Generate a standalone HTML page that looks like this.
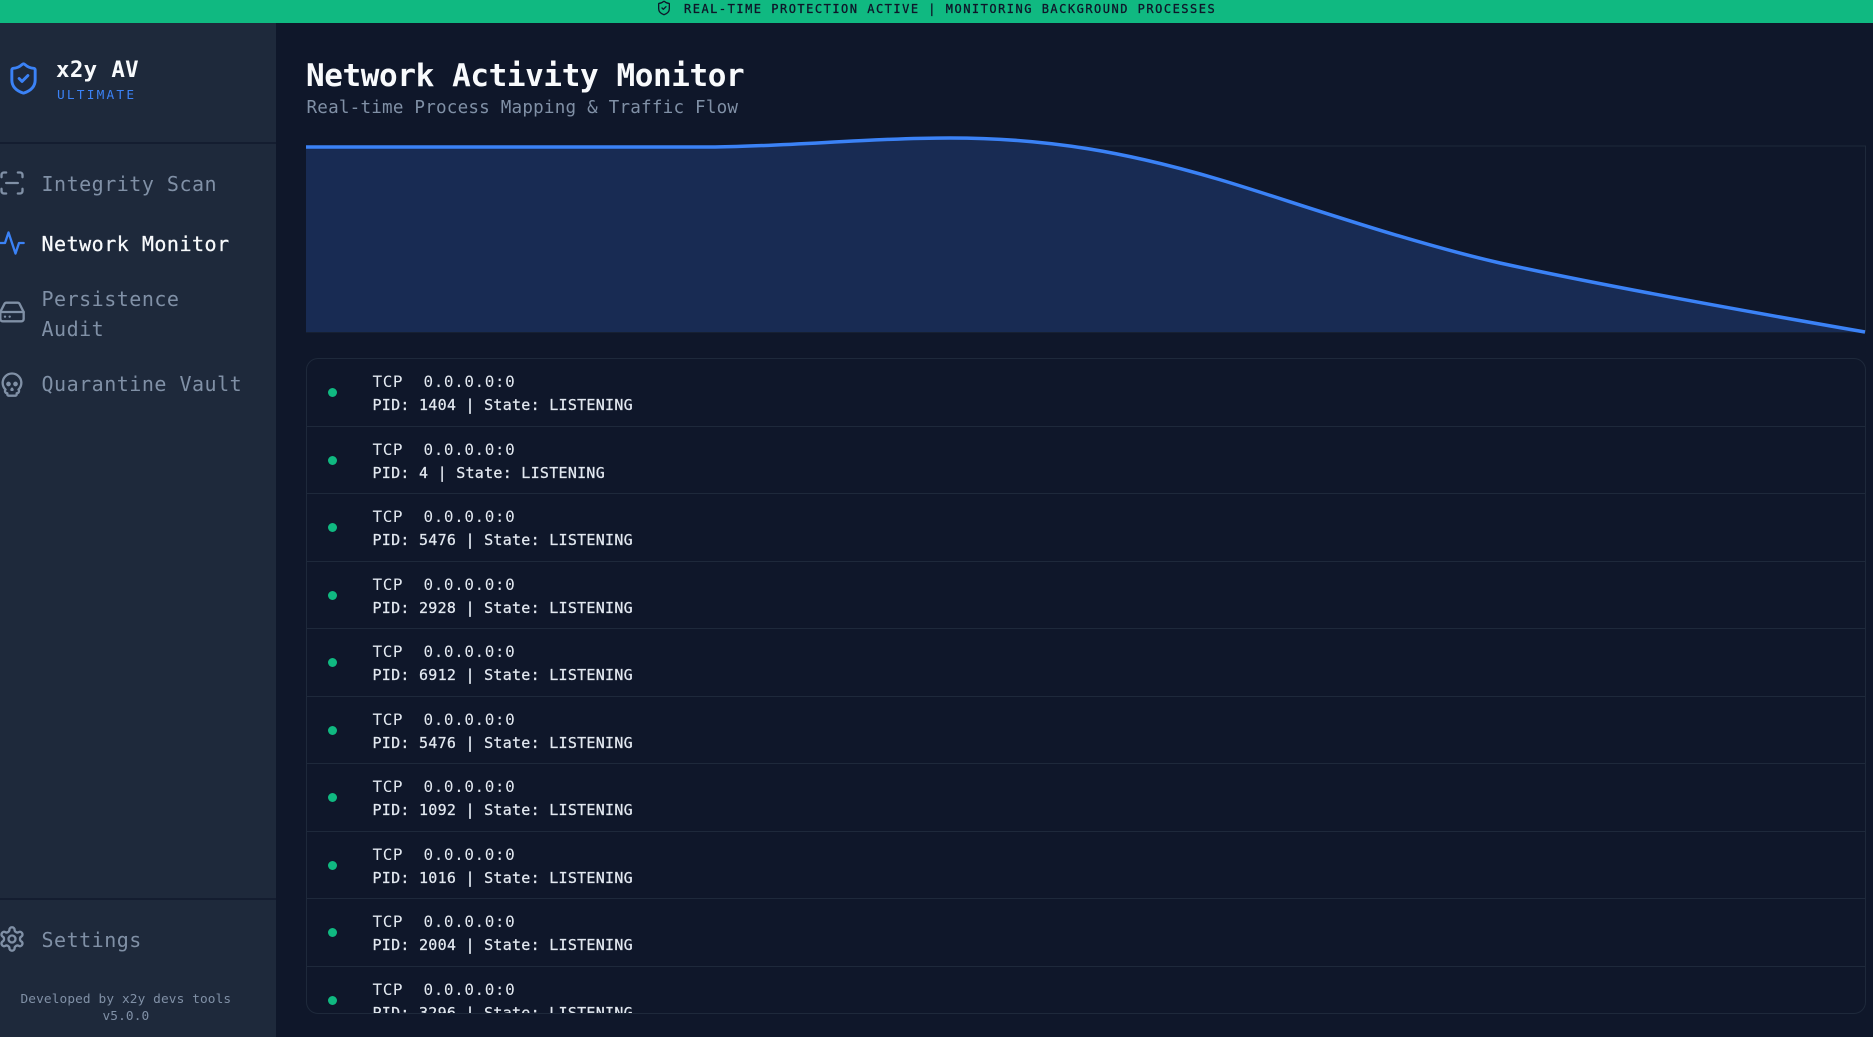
<!DOCTYPE html>
<html lang="en">
<head>
<meta charset="utf-8">
<title>x2y AV</title>
<style>
html,body{margin:0;padding:0;width:1873px;height:1037px;overflow:hidden;background:#0f172a}
body{position:relative;font-family:"DejaVu Sans Mono","Liberation Mono",monospace}
.t{position:absolute;white-space:pre;line-height:20px}
.abs{position:absolute}
svg{position:absolute;overflow:visible}
.ic{fill:none;stroke-width:2;stroke-linecap:round;stroke-linejoin:round}
.nav{font-size:20px;letter-spacing:.5px;color:#8090a6;left:41.5px}
.row{position:absolute;left:0;width:1559px;height:67.5px;box-sizing:border-box;border-bottom:1px solid #1e293b}
.row i{position:absolute;left:21px;top:29px;width:9px;height:9px;border-radius:50%;background:#10b981}
.row b{position:absolute;left:65.5px;top:13px;font-weight:400;font-size:16px;letter-spacing:.57px;color:#e2e8f0;line-height:20px;white-space:pre}
.row u{position:absolute;left:65.5px;top:36px;text-decoration:none;font-size:15px;letter-spacing:.27px;color:#e2e8f0;line-height:20px;white-space:pre;-webkit-text-stroke:.25px #e2e8f0}
</style>
</head>
<body>
<div class="abs" style="left:0;top:0;width:1873px;height:23px;background:#10b981"></div>
<svg style="left:656px;top:0" width="16" height="16" viewBox="0 0 24 24"><g class="ic" stroke="#0f172a"><path d="M20 13c0 5-3.5 7.5-7.66 8.95a1 1 0 0 1-.67-.01C7.5 20.5 4 18 4 13V6a1 1 0 0 1 1-1c2 0 4.5-1.2 6.24-2.72a1.17 1.17 0 0 1 1.52 0C14.51 3.81 17 5 19 5a1 1 0 0 1 1 1z"/><path d="m9 12 2 2 4-4"/></g></svg>
<div class="t" style="left:684px;top:-1px;font-size:12px;letter-spacing:1.5px;color:#0f172a;-webkit-text-stroke:.3px #0f172a">REAL-TIME PROTECTION ACTIVE | MONITORING BACKGROUND PROCESSES</div>

<div class="abs" style="left:0;top:23px;width:276px;height:1014px;background:#1e293b"></div>
<div class="abs" style="left:0;top:142px;width:276px;height:2px;background:#141d30"></div>
<div class="abs" style="left:0;top:898px;width:276px;height:2px;background:#141d30"></div>

<svg style="left:6px;top:61px" width="35" height="35" viewBox="0 0 24 24"><g class="ic" stroke="#3b82f6"><path d="M20 13c0 5-3.5 7.5-7.66 8.95a1 1 0 0 1-.67-.01C7.5 20.5 4 18 4 13V6a1 1 0 0 1 1-1c2 0 4.5-1.2 6.24-2.72a1.17 1.17 0 0 1 1.52 0C14.51 3.81 17 5 19 5a1 1 0 0 1 1 1z"/><path d="m9 12 2 2 4-4"/></g></svg>
<div class="t" style="left:56px;top:60px;font-size:22.4px;letter-spacing:.35px;font-weight:700;color:#f8fafc">x2y AV</div>
<div class="t" style="left:57px;top:86px;font-size:12.8px;letter-spacing:2.2px;color:#3b82f6">ULTIMATE</div>

<svg style="left:-2px;top:169px" width="28" height="28" viewBox="0 0 24 24"><g class="ic" stroke="#8090a6"><path d="M3 7V5a2 2 0 0 1 2-2h2"/><path d="M17 3h2a2 2 0 0 1 2 2v2"/><path d="M21 17v2a2 2 0 0 1-2 2h-2"/><path d="M7 21H5a2 2 0 0 1-2-2v-2"/><path d="M7 12h10"/></g></svg>
<div class="t nav" style="top:174px">Integrity Scan</div>

<svg style="left:-2px;top:229px" width="28" height="28" viewBox="0 0 24 24"><g class="ic" stroke="#3b82f6"><polyline points="22 12 18 12 15 21 9 3 6 12 2 12"/></g></svg>
<div class="t nav" style="top:234px;color:#f8fafc;-webkit-text-stroke:.25px #f8fafc">Network Monitor</div>

<svg style="left:-2px;top:298px" width="28" height="28" viewBox="0 0 24 24"><g class="ic" stroke="#8090a6"><line x1="22" y1="12" x2="2" y2="12"/><path d="M5.45 5.11 2 12v6a2 2 0 0 0 2 2h16a2 2 0 0 0 2-2v-6l-3.45-6.89A2 2 0 0 0 16.76 4H7.24a2 2 0 0 0-1.79 1.11z"/><line x1="6" y1="16" x2="6.01" y2="16"/><line x1="10" y1="16" x2="10.01" y2="16"/></g></svg>
<div class="t nav" style="top:289px">Persistence</div>
<div class="t nav" style="top:319px">Audit</div>

<svg style="left:-2px;top:369.5px" width="28" height="28" viewBox="0 0 24 24"><g class="ic" stroke="#8090a6"><path d="m12.5 17-.5-1-.5 1h1z"/><path d="M15 22a1 1 0 0 0 1-1v-1a2 2 0 0 0 1.56-3.25 8 8 0 1 0-11.12 0A2 2 0 0 0 8 20v1a1 1 0 0 0 1 1z"/><circle cx="15" cy="12" r="1"/><circle cx="9" cy="12" r="1"/></g></svg>
<div class="t nav" style="top:374px">Quarantine Vault</div>

<svg style="left:-2px;top:925px" width="28" height="28" viewBox="0 0 24 24"><g class="ic" stroke="#8090a6"><path d="M12.22 2h-.44a2 2 0 0 0-2 2v.18a2 2 0 0 1-1 1.73l-.43.25a2 2 0 0 1-2 0l-.15-.08a2 2 0 0 0-2.73.73l-.22.38a2 2 0 0 0 .73 2.73l.15.1a2 2 0 0 1 1 1.72v.51a2 2 0 0 1-1 1.74l-.15.09a2 2 0 0 0-.73 2.73l.22.38a2 2 0 0 0 2.73.73l.15-.08a2 2 0 0 1 2 0l.43.25a2 2 0 0 1 1 1.73V20a2 2 0 0 0 2 2h.44a2 2 0 0 0 2-2v-.18a2 2 0 0 1 1-1.73l.43-.25a2 2 0 0 1 2 0l.15.08a2 2 0 0 0 2.73-.73l.22-.39a2 2 0 0 0-.73-2.73l-.15-.08a2 2 0 0 1-1-1.74v-.5a2 2 0 0 1 1-1.74l.15-.09a2 2 0 0 0 .73-2.73l-.22-.38a2 2 0 0 0-2.73-.73l-.15.08a2 2 0 0 1-2 0l-.43-.25a2 2 0 0 1-1-1.73V4a2 2 0 0 0-2-2z"/><circle cx="12" cy="12" r="3"/></g></svg>
<div class="t nav" style="top:930px">Settings</div>

<div class="t" style="left:20.5px;top:990px;font-size:12.8px;letter-spacing:.1px;color:#8090a6">Developed by x2y devs tools</div>
<div class="t" style="left:102.5px;top:1007px;font-size:12.8px;letter-spacing:.1px;color:#8090a6">v5.0.0</div>

<div class="t" style="left:306px;top:65px;font-size:31px;line-height:22px;letter-spacing:-.4px;font-weight:700;color:#f8fafc">Network Activity Monitor</div>
<div class="t" style="left:306.5px;top:98px;font-size:17.6px;letter-spacing:.2px;color:#8090a6">Real-time Process Mapping &amp; Traffic Flow</div>

<svg style="left:0;top:0" width="1873" height="400" viewBox="0 0 1873 400">
<rect x="306.5" y="146" width="1559" height="186" fill="none" stroke="#1e293b" stroke-width="1"/>
<path d="M306,147 L715,147 C790,146 875,138 950,138 C1050,138 1130,153 1221,180 C1285,199 1400,240 1500,263 C1600,285 1750,312 1865,332 L306,332 Z" fill="#182b53"/>
<path d="M306,147 L715,147 C790,146 875,138 950,138 C1050,138 1130,153 1221,180 C1285,199 1400,240 1500,263 C1600,285 1750,312 1865,332" fill="none" stroke="#3b82f6" stroke-width="3.5"/>
</svg>

<div class="abs" style="left:306px;top:358px;width:1560px;height:656px;box-sizing:border-box;border:1px solid #1e293b;border-radius:12px;overflow:hidden">
<div class="row" style="top:0"><i></i><b>TCP  0.0.0.0:0</b><u>PID: 1404 | State: LISTENING</u></div>
<div class="row" style="top:67.5px"><i></i><b>TCP  0.0.0.0:0</b><u>PID: 4 | State: LISTENING</u></div>
<div class="row" style="top:135px"><i></i><b>TCP  0.0.0.0:0</b><u>PID: 5476 | State: LISTENING</u></div>
<div class="row" style="top:202.5px"><i></i><b>TCP  0.0.0.0:0</b><u>PID: 2928 | State: LISTENING</u></div>
<div class="row" style="top:270px"><i></i><b>TCP  0.0.0.0:0</b><u>PID: 6912 | State: LISTENING</u></div>
<div class="row" style="top:337.5px"><i></i><b>TCP  0.0.0.0:0</b><u>PID: 5476 | State: LISTENING</u></div>
<div class="row" style="top:405px"><i></i><b>TCP  0.0.0.0:0</b><u>PID: 1092 | State: LISTENING</u></div>
<div class="row" style="top:472.5px"><i></i><b>TCP  0.0.0.0:0</b><u>PID: 1016 | State: LISTENING</u></div>
<div class="row" style="top:540px"><i></i><b>TCP  0.0.0.0:0</b><u>PID: 2004 | State: LISTENING</u></div>
<div class="row" style="top:607.5px"><i></i><b>TCP  0.0.0.0:0</b><u>PID: 3296 | State: LISTENING</u></div>
</div>
</body>
</html>
